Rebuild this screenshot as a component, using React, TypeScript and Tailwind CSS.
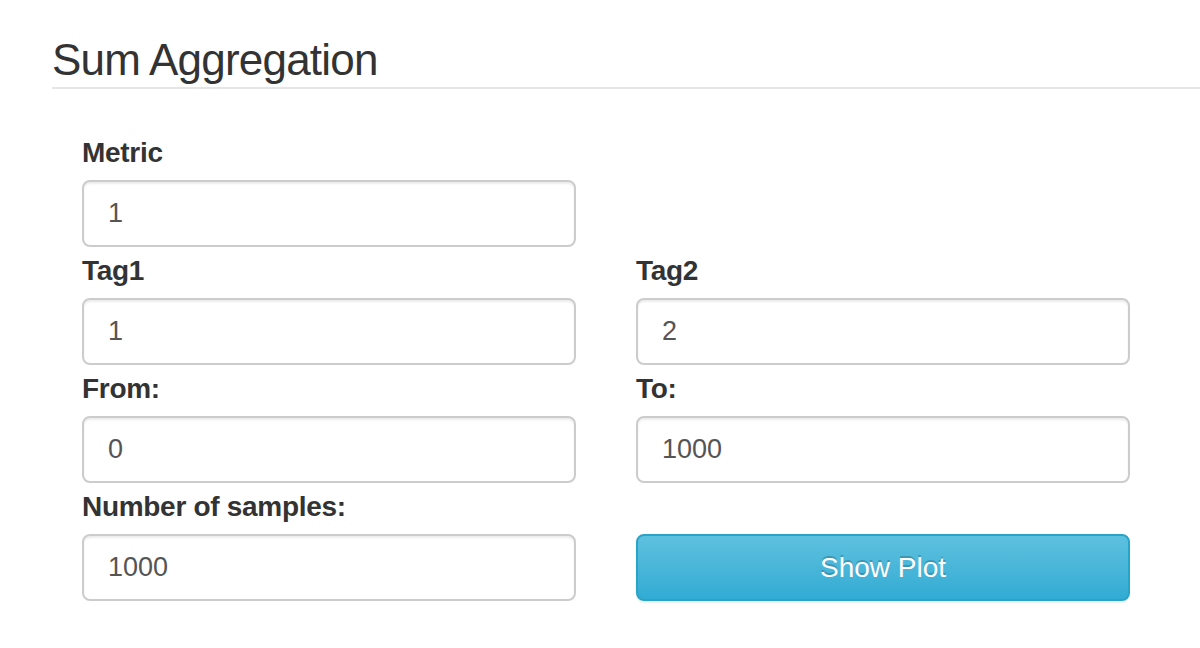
import React from "react";

const font = { fontFamily: '"Liberation Sans", Arial, sans-serif' };

function Field({ label, value }: { label: string; value: string }) {
  return (
    <div className="flex flex-col">
      <label className="h-[40px] leading-[45px] text-[28px] font-bold text-[#333] mb-[10px] tracking-[-0.3px]">{label}</label>
      <input
        readOnly
        value={value}
        className="h-[67px] w-full rounded-[8px] border-2 border-[#cccccc] bg-white px-[24px] text-[27px] text-[#555] shadow-[inset_0_2px_2px_rgba(0,0,0,0.075)] outline-none"
        style={font}
      />
    </div>
  );
}

export default function App() {
  return (
    <div className="w-[1200px] h-[648px] bg-white overflow-hidden" style={font}>
      <div className="pl-[52px] pt-[34px]">
        <div className="border-b-2 border-[#e5e5e5] pb-[1px]">
          <h3 className="text-[44px] leading-[52px] font-normal text-[#333] tracking-[-0.8px]">Sum Aggregation</h3>
        </div>
      </div>
      <div className="pl-[82px] pt-[41px] grid grid-cols-[494px_494px] gap-x-[60px] gap-y-[1px]">
        <Field label="Metric" value="1" />
        <div />
        <Field label="Tag1" value="1" />
        <Field label="Tag2" value="2" />
        <Field label="From:" value="0" />
        <Field label="To:" value="1000" />
        <Field label="Number of samples:" value="1000" />
        <div className="flex flex-col justify-end">
          <button
            className="h-[67px] w-full rounded-[8px] border-2 border-[#2aa3c9] bg-gradient-to-b from-[#5dc1df] to-[#31abd3] text-[28px] text-white [text-shadow:0_-2px_0_rgba(0,0,0,0.2)] shadow-[0_2px_2px_rgba(0,0,0,0.075)]"
            style={font}
          >
            Show Plot
          </button>
        </div>
      </div>
    </div>
  );
}
